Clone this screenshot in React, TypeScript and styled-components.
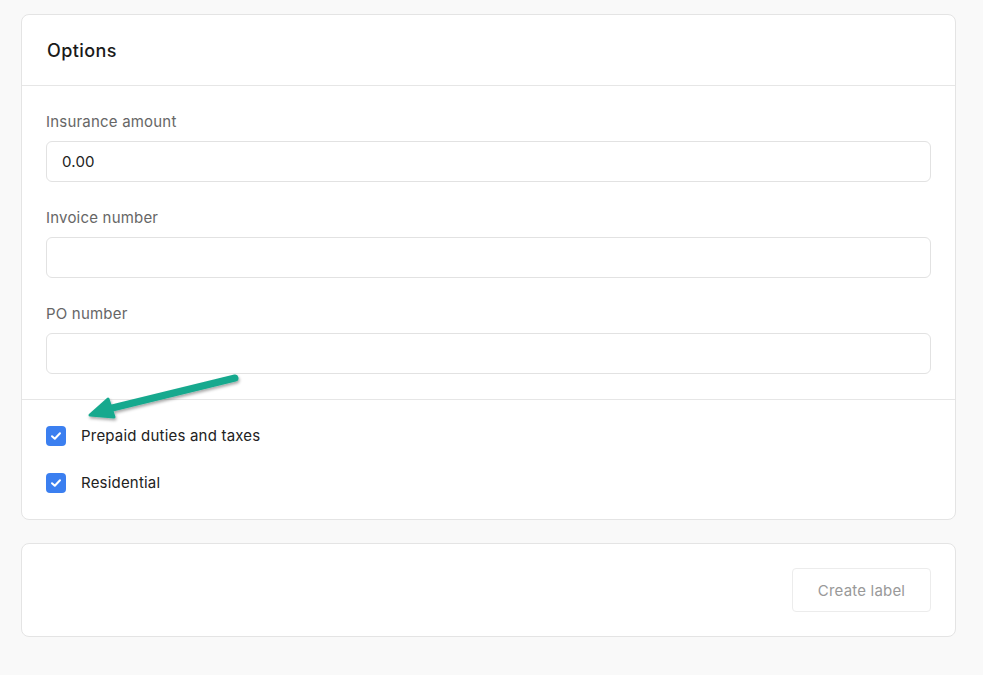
import styled, { createGlobalStyle } from 'styled-components';

const GlobalStyle = createGlobalStyle`
  body {
    margin: 0;
    background-color: #f9f9f9;
    font-family: Inter, 'Noto Sans', sans-serif;
    color: #222;
    letter-spacing: 0.2px;
  }
`;

const fields = [
  { label: 'Insurance amount', value: '0.00' },
  { label: 'Invoice number', value: '' },
  { label: 'PO number', value: '' },
];

const checks = ['Prepaid duties and taxes', 'Residential'];

const Check = () => (
  <svg width="14" height="14" viewBox="0 0 14 14" fill="none">
    <path d="M3 7.2 L5.8 9.8 L11 4.2" stroke="#fff" strokeWidth="2" strokeLinecap="round" strokeLinejoin="round" />
  </svg>
);

const Arrow = () => (
  <ArrowSvg width="180" height="60" viewBox="0 0 180 60">
    <defs>
      <filter id="sh" x="-20%" y="-50%" width="140%" height="200%">
        <feDropShadow dx="1" dy="2" stdDeviation="1.5" floodColor="#000" floodOpacity="0.35" />
      </filter>
    </defs>
    <g filter="url(#sh)">
      <line x1="153" y1="8" x2="22" y2="40" stroke="#17a98e" strokeWidth="7" strokeLinecap="round" />
      <path d="M8 45 L26 29 L32 47 Z" fill="#17a98e" stroke="#17a98e" strokeWidth="3" strokeLinejoin="round" />
    </g>
  </ArrowSvg>
);

const App = () => {
  return (
    <>
      <GlobalStyle />
      <Page>
        <Card>
          <Header>Options</Header>
          <Section>
            {fields.map((f) => (
              <Field key={f.label}>
                <Label>{f.label}</Label>
                <Input defaultValue={f.value} />
              </Field>
            ))}
          </Section>
          <CheckSection>
            <Arrow />
            {checks.map((c) => (
              <CheckRow key={c}>
                <Box>
                  <Check />
                </Box>
                {c}
              </CheckRow>
            ))}
          </CheckSection>
        </Card>
        <Footer>
          <Button disabled>Create label</Button>
        </Footer>
      </Page>
    </>
  );
};

const Page = styled.div`
  padding: 14px 27px 38px 21px;
  display: flex;
  flex-direction: column;
  gap: 23px;
`;

const Card = styled.div`
  background: #fff;
  border: 1px solid #e4e4e4;
  border-radius: 8px;
`;

const Header = styled.div`
  height: 70px;
  padding: 0 25px;
  display: flex;
  align-items: center;
  font-size: 18px;
  font-weight: 500;
  letter-spacing: 0.4px;
  color: #1a1a1a;
  border-bottom: 1px solid #e6e6e6;
`;

const Section = styled.div`
  padding: 26px 24px 25px;
  display: flex;
  flex-direction: column;
  gap: 26px;
  border-bottom: 1px solid #e6e6e6;
`;

const Field = styled.div`
  display: flex;
  flex-direction: column;
  gap: 9px;
`;

const Label = styled.label`
  font-size: 15px;
  line-height: 20px;
  color: #666;
`;

const Input = styled.input`
  box-sizing: border-box;
  height: 41px;
  width: 100%;
  padding: 0 15px;
  border: 1px solid #e2e2e2;
  border-radius: 6px;
  font-family: inherit;
  font-size: 15px;
  letter-spacing: 0.2px;
  color: #222;
  outline: none;
`;

const CheckSection = styled.div`
  position: relative;
  padding: 26px 24px 26px;
  display: flex;
  flex-direction: column;
  gap: 27px;
`;

const ArrowSvg = styled.svg`
  position: absolute;
  left: 60px;
  top: -30px;
`;

const CheckRow = styled.label`
  display: flex;
  align-items: center;
  gap: 15px;
  font-size: 15px;
  line-height: 20px;
  color: #222;
`;

const Box = styled.span`
  width: 20px;
  height: 20px;
  border-radius: 4px;
  background: #3b7ff0;
  display: flex;
  align-items: center;
  justify-content: center;
`;

const Footer = styled.div`
  background: #fff;
  border: 1px solid #e4e4e4;
  border-radius: 8px;
  padding: 24px 24px 24px;
  display: flex;
  justify-content: flex-end;
`;

const Button = styled.button`
  height: 44px;
  width: 139px;
  background: #fff;
  border: 1px solid #ececec;
  border-radius: 4px;
  font-family: inherit;
  font-size: 15px;
  letter-spacing: 0.2px;
  color: #999;
`;

export default App;
